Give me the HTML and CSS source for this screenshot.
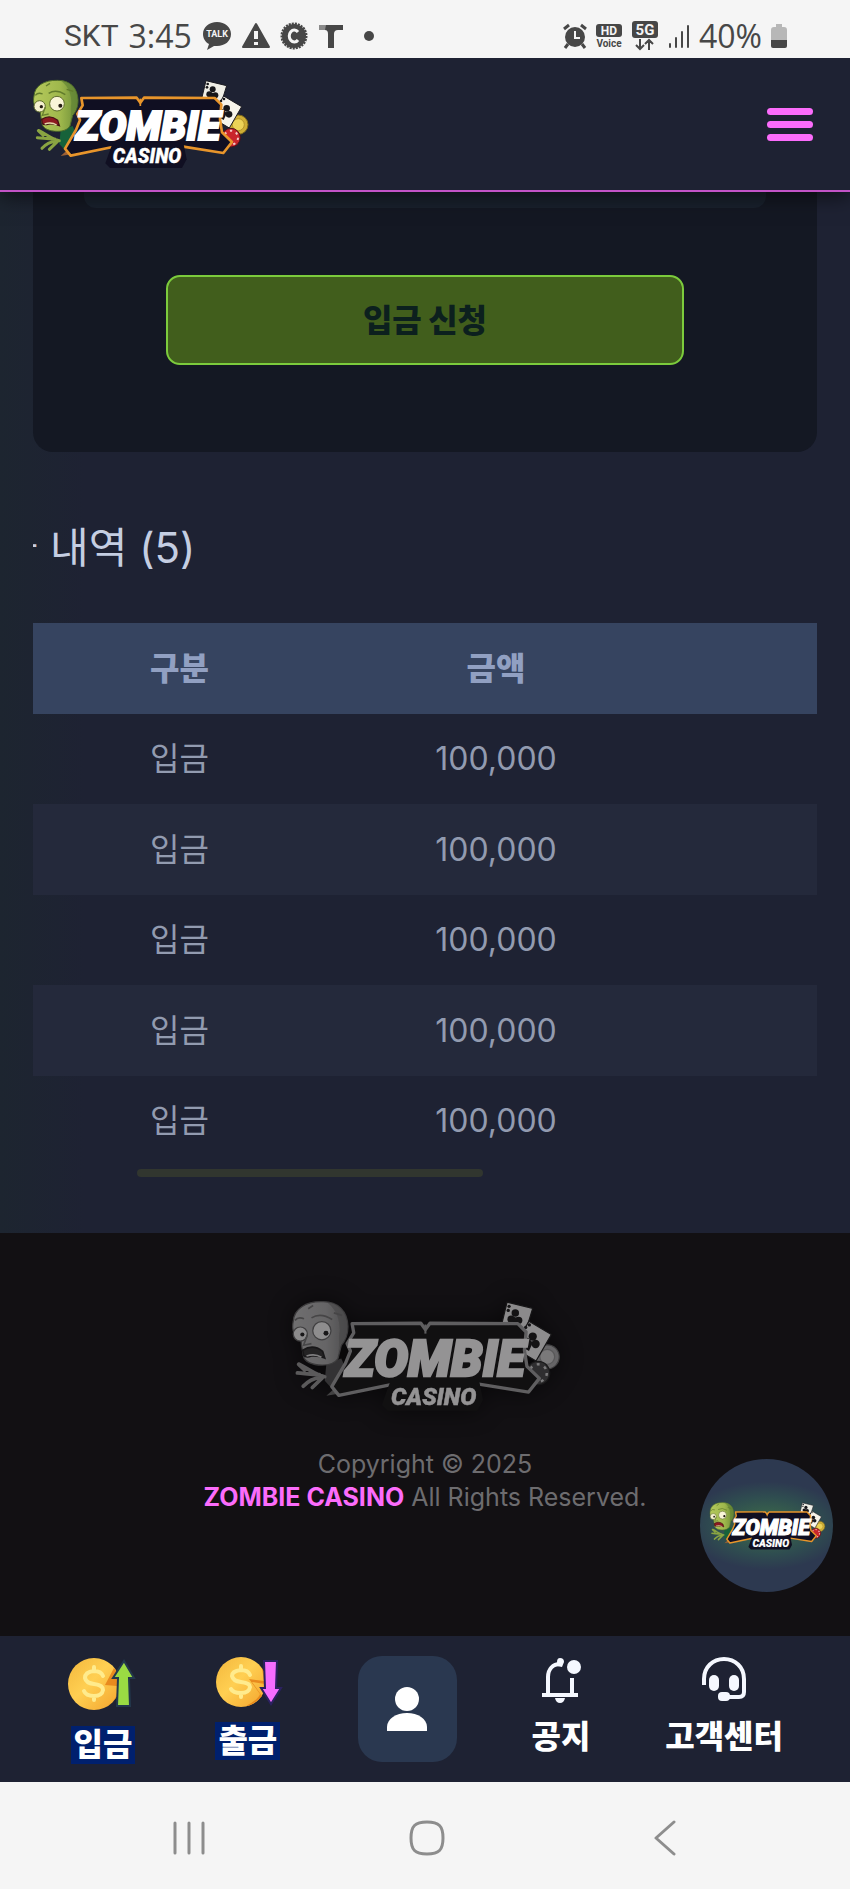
FILE: index.html
```html
<!DOCTYPE html>
<html lang="ko">
<head>
  <meta charset="UTF-8">
  <meta name="viewport" content="width=device-width, initial-scale=1.0">
  <title>ZOMBIE CASINO</title>
  <link rel="stylesheet" href="styles.css">
</head>
<body>
  <!-- shared logo -->
  <svg class="defs" width="0" height="0" aria-hidden="true">
    <defs>
      <linearGradient id="skin" x1="0" x2="1">
        <stop offset="0" stop-color="#b5c95c"/>
        <stop offset=".6" stop-color="#9fb84c"/>
        <stop offset="1" stop-color="#6c8d38"/>
      </linearGradient>
      <linearGradient id="coin" x1="0" x2="1" y2="1">
        <stop offset="0" stop-color="#f3b73c"/>
        <stop offset=".45" stop-color="#ffcf52"/>
        <stop offset="1" stop-color="#f3a32c"/>
      </linearGradient>
    </defs>
    <symbol id="logo" viewBox="30 50 660 280">
      <!-- chips and cards -->
      <circle cx="655" cy="192" r="29" fill="#cfae35" stroke="#806a1c" stroke-width="3"/>
      <circle cx="655" cy="192" r="18" fill="#ecd257" stroke="#b3942a" stroke-width="3"/>
      <circle cx="633" cy="231" r="28" fill="#c9252c" stroke="#521018" stroke-width="3"/>
      <circle cx="633" cy="231" r="21" fill="none" stroke="#f3c9c6" stroke-width="6" stroke-dasharray="7 12"/>
      <g stroke="#1a1a20" stroke-width="3">
        <path d="M558 60L620 75L602 134L544 118Z" fill="#efeee6"/>
        <path d="M611 106L665 138L628 202L574 170Z" fill="#f7f4ea"/>
      </g>
      <g fill="#16161a">
        <circle cx="578" cy="86" r="9"/><circle cx="568" cy="101" r="9"/><circle cx="586" cy="104" r="9"/>
        <path d="M575 96L584 98L578 119L566 115Z"/>
        <circle cx="620" cy="143" r="10"/><circle cx="606" cy="156" r="10"/><circle cx="627" cy="161" r="10"/>
        <path d="M611 152L621 156L611 178L599 171Z"/>
        <circle cx="563" cy="70" r="4"/><circle cx="561" cy="80" r="4"/><circle cx="612" cy="115" r="4"/><circle cx="603" cy="121" r="4"/>
      </g>
      <!-- zombie -->
      <path d="M122 208L158 196L176 238L140 274L118 250Z" fill="#17623a"/>
      <path d="M42 106C44 76 72 58 112 59C150 58 173 82 174 119C174 142 166 155 158 164L150 196C142 208 128 212 112 212C88 212 68 204 66 188L62 164L60 146C42 140 38 124 42 106Z" fill="url(#skin)" stroke="#4d6a29" stroke-width="3"/>
      <path d="M124 61C157 64 172 86 172 117C172 140 165 153 156 162L148 196C156 162 150 150 154 128C154 104 148 80 124 61Z" fill="#5e8133" opacity=".6"/>
      <path d="M78 76L90 68M86 98Q108 84 136 102M140 86L160 92M46 104Q54 94 68 100" fill="none" stroke="#627c2c" stroke-width="4"/>
      <circle cx="59" cy="137" r="17" fill="#f4f0cf" stroke="#5f6d2d" stroke-width="3"/>
      <circle cx="111" cy="129" r="22" fill="#f9f5d8" stroke="#5f6d2d" stroke-width="3"/>
      <circle cx="64" cy="138" r="5" fill="#231c12"/><circle cx="121" cy="135" r="6" fill="#231c12"/>
      <path d="M76 139L67 164L86 160" fill="none" stroke="#687f2f" stroke-width="4"/>
      <path d="M65 176Q90 160 113 179L118 195Q102 188 86 190Q72 195 67 188Z" fill="#8c1a20" stroke="#451315" stroke-width="4"/>
      <path d="M74 190Q94 183 110 193" fill="none" stroke="#e5d9aa" stroke-width="4"/>
      <path d="M118 240C96 236 86 225 57 210M105 235C83 235 69 232 52 231M107 242C86 244 76 252 66 263M112 243L88 266M55 210L70 224" fill="none" stroke="#8aa442" stroke-width="9" stroke-linecap="round"/>
      <path d="M122 286L142 268L158 280Z" fill="#9d6035"/>
      <!-- wordmark plate -->
      <path d="M184 112L350 111L361 126L372 111L584 112L604 132L600 176L606 215L636 244L610 277L490 258L278 259L152 285L135 264L168 208L180 178L172 160L188 134Z" fill="#100f22" stroke="#e8952b" stroke-width="8" stroke-linejoin="round"/>
      <path d="M278 246L490 246L500 296L486 322L270 322L256 308Z" fill="#100f22"/>
      <text class="logo-big" x="384" y="238" text-anchor="middle">ZOMBIE</text>
      <path d="M361 114V136" stroke="#e8952b" stroke-width="5"/>
      <text class="logo-small" x="381" y="308" text-anchor="middle">CASINO</text>
    </symbol>
  </svg>

  <div class="status-bar">
    <div class="status-left">
      <span class="carrier">SKT</span>
      <span class="time">3:45</span>
      <svg class="icon" width="30" height="28" viewBox="0 0 30 28">
        <path d="M15 0C23 0 29 5 29 12S23 24 15 24L12 24L5 28L7 22C3 20 1 16 1 12C1 5 7 0 15 0Z"/>
        <text class="mark" x="15" y="15" font-size="9" text-anchor="middle">TALK</text>
      </svg>
      <svg class="icon" width="28" height="28" viewBox="0 0 28 28">
        <path d="M14 2L27 25H1Z" stroke="#474747" stroke-width="2" stroke-linejoin="round"/>
        <path d="M14 9V17M14 20V23" stroke="#f5f5f5" stroke-width="4"/>
      </svg>
      <svg class="icon" width="28" height="28" viewBox="0 0 28 28">
        <circle cx="14" cy="14" r="12"/>
        <circle cx="14" cy="14" r="12" fill="none" stroke="#474747" stroke-width="3" stroke-dasharray="2 1"/>
        <path d="M18 10A5 6 0 1 0 18 18" fill="none" stroke="#f5f5f5" stroke-width="3"/>
      </svg>
      <svg class="icon" width="26" height="28" viewBox="0 0 26 28">
        <path d="M1 3H14V8H1Z" fill="#8b8b8b"/>
        <path d="M8 3H25V8H20Q16 8 16 12V26H10V12Q10 8 7 8Z"/>
      </svg>
      <span class="dot"></span>
    </div>
    <div class="status-right">
      <svg class="icon" width="24" height="26" viewBox="0 0 24 26">
        <circle cx="12" cy="14" r="10"/>
        <path d="M1 6L6 2M23 6L18 2M5 21L2 25M19 21L22 25" stroke="#474747" stroke-width="3"/>
        <path d="M12 8V15H17" fill="none" stroke="#f5f5f5" stroke-width="2"/>
      </svg>
      <svg class="icon" width="28" height="26" viewBox="0 0 28 26">
        <rect x="1" y="1" width="26" height="13" rx="3"/>
        <text class="mark" x="14" y="12" font-size="12" text-anchor="middle">HD</text>
        <text x="14" y="24" font-size="10" text-anchor="middle">Voice</text>
      </svg>
      <svg class="icon" width="28" height="32" viewBox="0 0 28 32">
        <rect x="1" y="1" width="26" height="17" rx="3"/>
        <text class="mark" x="14" y="15" font-size="15" text-anchor="middle">5G</text>
        <path d="M9 19V29M5 25L9 29L13 25M18 30V20M14 24L18 20L22 24" fill="none" stroke="#474747" stroke-width="2"/>
      </svg>
      <svg class="icon" width="24" height="26" viewBox="0 0 24 26">
        <path d="M3 21V24M9 15V24M15 9V24M21 3V24" stroke="#474747" stroke-width="2" stroke-linecap="round"/>
      </svg>
      <span class="time">40%</span>
      <svg class="icon" width="18" height="26" viewBox="0 0 18 26">
        <path d="M6 1H12V4H14Q17 4 17 7V18H1V7Q1 4 4 4H6Z" fill="#b7b7b7"/>
        <path d="M1 17H17V23Q17 25 15 25H3Q1 25 1 23Z"/>
      </svg>
    </div>
  </div>

  <header class="header">
    <a href="#" aria-label="ZOMBIE CASINO"><svg class="header-logo"><use href="#logo"/></svg></a>
    <button class="menu-btn" type="button" aria-label="메뉴">
      <span></span><span></span><span></span>
    </button>
  </header>

  <main class="content">
    <section class="card">
      <div class="card-panel"></div>
      <button class="submit-btn" type="button">입금 신청</button>
    </section>

    <section class="history">
      <div class="history-inner">
        <h2 class="history-title">입금 내역 (5)</h2>
        <table class="history-table">
          <thead>
            <tr><th class="col-type">구분</th><th class="col-amount">금액</th><th></th></tr>
          </thead>
          <tbody>
            <tr><td>입금</td><td>100,000</td><td></td></tr>
            <tr><td>입금</td><td>100,000</td><td></td></tr>
            <tr><td>입금</td><td>100,000</td><td></td></tr>
            <tr><td>입금</td><td>100,000</td><td></td></tr>
            <tr><td>입금</td><td>100,000</td><td></td></tr>
          </tbody>
        </table>
      </div>
      <div class="scroll-track"><div class="scroll-thumb"></div></div>
    </section>
  </main>

  <footer class="footer">
    <svg class="footer-logo"><use href="#logo"/></svg>
    <p>Copyright © 2025<br><strong>ZOMBIE CASINO</strong> All Rights Reserved.</p>
    <a class="float-btn" href="#" aria-label="ZOMBIE CASINO"><svg><use href="#logo"/></svg></a>
  </footer>

  <nav class="tab-bar">
    <a class="tab" href="#">
      <svg width="70" height="56" viewBox="-1 0 70 56">
        <circle cx="25" cy="28" r="26" fill="url(#coin)"/>
        <path d="M45 12L36 29L48 30Q50 44 36 51Q50 44 51 28Q50 18 45 12Z" fill="#e88a1e"/>
        <path d="M34 20Q32 15 25 15Q16 16 16 22Q17 27 25 28Q34 29 34 34Q33 40 25 40Q17 40 15 35M25 11V15M25 40V44" fill="none" stroke="#ffeb8d" stroke-width="4" stroke-linecap="round"/>
        <path d="M55 5L65 22H60L61 50H48L49 22H44Z" fill="#9adb43" stroke="#23384c" stroke-width="2"/>
      </svg>
      <span class="tab-label marked">입금</span>
    </a>
    <a class="tab" href="#">
      <svg width="70" height="52" viewBox="-3 0 70 52">
        <circle cx="25" cy="26" r="25" fill="url(#coin)"/>
        <path d="M46 12Q52 22 49 28L36 26L46 40Q38 49 30 50Q43 43 44 38L33 23L48 25Z" fill="#e88a1e"/>
        <path d="M34 19Q32 14 25 14Q16 15 16 20Q17 25 25 26Q34 27 34 31Q33 37 25 37Q17 37 15 33M25 10V14M25 37V41" fill="none" stroke="#ffeb8d" stroke-width="4" stroke-linecap="round"/>
        <path d="M48 5H61L60 32H65L55 48L45 32H49Z" fill="#f66cff" stroke="#2b2160" stroke-width="2"/>
      </svg>
      <span class="tab-label marked">출금</span>
    </a>
    <a class="tab-center" href="#" aria-label="내 정보">
      <svg width="44" height="48" viewBox="0 0 44 48">
        <circle cx="22" cy="14" r="12" fill="#fff"/>
        <path d="M2 46V42C2 34 11 28 22 28S42 34 42 42V46Z" fill="#fff"/>
      </svg>
    </a>
    <a class="tab" href="#">
      <svg width="42" height="48" viewBox="0 0 42 48">
        <path d="M2 39H38M8 39V21C8 13 13 8 20 8M32 22V39" fill="none" stroke="#f5f8ff" stroke-width="4"/>
        <path d="M17 10V6Q17 2 20 2Q24 2 24 6L22 11Z" fill="#f5f8ff"/>
        <circle cx="34" cy="11" r="7" fill="#f5f8ff"/>
        <path d="M15 42H25Q24 47 20 47Q16 47 15 42Z" fill="#f5f8ff"/>
      </svg>
      <span class="tab-label">공지</span>
    </a>
    <a class="tab" href="#">
      <svg width="46" height="48" viewBox="0 0 46 48">
        <path d="M3 29V23C3 11 12 3 23 3S43 11 43 23V36Q43 41 38 41H24" fill="none" stroke="#f5f8ff" stroke-width="4"/>
        <rect x="8" y="19" width="10" height="16" rx="5" fill="#f5f8ff"/>
        <rect x="28" y="19" width="10" height="16" rx="5" fill="#f5f8ff"/>
        <rect x="17" y="36" width="12" height="9" rx="4" fill="#f5f8ff"/>
      </svg>
      <span class="tab-label">고객센터</span>
    </a>
  </nav>

  <div class="system-nav">
    <button type="button" aria-label="최근 앱">
      <svg width="34" height="36" viewBox="0 0 34 36"><path d="M3 3V33M17 3V33M31 3V33"/></svg>
    </button>
    <button type="button" aria-label="홈">
      <svg width="36" height="36" viewBox="0 0 36 36"><path d="M18 2C30 2 34 6 34 18S30 34 18 34S2 30 2 18S6 2 18 2Z"/></svg>
    </button>
    <button type="button" aria-label="뒤로">
      <svg width="22" height="36" viewBox="0 0 22 36"><path d="M20 2L2 18L20 34"/></svg>
    </button>
  </div>
</body>
</html>
```

FILE: styles.css
```css
* {
    box-sizing: border-box;
}
body {
    margin: 0;
    background: #1e2233;
    color: #929bb0;
    font-family: Inter, "Noto Sans CJK KR", sans-serif;
    font-size: 32px;
}
a {
    color: inherit;
    text-decoration: none;
}
button {
    font-family: inherit;
    cursor: pointer;
}
svg {
    display: block;
}
.defs {
    position: absolute;
}
.logo-big,
.logo-small {
    font-family: Roboto, sans-serif;
    font-weight: 900;
    font-style: italic;
    fill: #fff;
    stroke: #fff;
}
.logo-big {
    font-size: 122px;
    stroke-width: 6px;
}
.logo-small {
    font-size: 58px;
    stroke-width: 1px;
}

/* phone status bar */
.status-bar {
    position: relative;
    z-index: 3;
    display: flex;
    justify-content: space-between;
    align-items: center;
    height: 58px;
    padding: 14px 62px 0 64px;
    background: #f5f5f5;
    color: #474747;
}
.status-left,
.status-right {
    display: flex;
    align-items: center;
    gap: 10px;
}
.status-right {
    gap: 8px;
}
.carrier {
    font-family: Roboto, sans-serif;
    font-size: 30px;
    line-height: 32px;
}
.time {
    font-family: "Open Sans", sans-serif;
    font-size: 32px;
    line-height: 32px;
}
.icon {
    fill: #474747;
    font-family: Roboto, sans-serif;
    font-weight: 700;
}
.icon .mark {
    fill: #f5f5f5;
}
.dot {
    width: 10px;
    height: 10px;
    margin-left: 10px;
    border-radius: 50%;
    background: #474747;
}

.header {
    position: relative;
    z-index: 2;
    display: flex;
    justify-content: space-between;
    align-items: center;
    height: 134px;
    padding: 0 37px 0 30px;
    background: #1e2233;
    border-bottom: 2px solid #c253c6;
    box-shadow: 0 4px 20px rgba(0, 0, 0, 0.6);
}
.header-logo {
    width: 220px;
    height: 94px;
}
.menu-btn {
    display: grid;
    gap: 6px;
    width: 46px;
    padding: 0;
    border: 0;
    background: none;
}
.menu-btn span {
    height: 7px;
    border-radius: 4px;
    background: #fb6cfb;
}

.content {
    padding: 0 33px 56px;
    background: linear-gradient(to right, #1d2530, #1e2233 10%);
}
.card {
    display: flex;
    flex-direction: column;
    align-items: center;
    padding-bottom: 87px;
    border-radius: 0 0 20px 20px;
    background: #141823;
}
.card-panel {
    width: 87%;
    height: 16px;
    margin-bottom: 67px;
    border-radius: 0 0 12px 12px;
    background: #19212d;
}
.submit-btn {
    width: 66%;
    height: 90px;
    padding: 0 0 4px;
    border: 2px solid #7ccb3c;
    border-radius: 14px;
    background: #415e1c;
    color: #0c201e;
    font-size: 32px;
    font-weight: 900;
}

/* the list is wider than the screen and sits scrolled to the right */
.history {
    padding-top: 66px;
    overflow: hidden;
}
.history-inner {
    margin-left: -72px;
}
.history-title {
    margin: 0 0 45px;
    color: #c5cee2;
    font-size: 42px;
    font-weight: 400;
    line-height: 60px;
}
.history-table {
    width: 100%;
    table-layout: fixed;
    border-collapse: collapse;
    text-align: center;
}
.history-table th,
.history-table td {
    height: 90px;
    padding: 0;
    line-height: 40px;
}
.history-table th,
.history-table tr:nth-child(even) td {
    height: 91px;
}
.history-table th {
    background: #364460;
    color: #91a0c2;
    font-weight: 900;
}
.history-table .col-type {
    width: 437px;
}
.history-table .col-amount {
    width: 196px;
}
.history-table tbody tr:nth-child(even) {
    background: #24293b;
}
.scroll-track {
    padding: 3px 0 0 104px;
}
.scroll-thumb {
    width: 346px;
    height: 8px;
    border-radius: 4px;
    background: #31362f;
}

.footer {
    position: relative;
    display: flex;
    flex-direction: column;
    align-items: center;
    padding: 65px 0 112px;
    background: #121013;
    color: #6d6c6f;
    text-align: center;
}
.footer-logo {
    width: 274px;
    height: 116px;
    filter: grayscale(1) drop-shadow(0 0 12px #000);
    opacity: 0.55;
}
.footer p {
    margin: 34px 0 0;
    padding-bottom: 10px;
    font-size: 25px;
    line-height: 33px;
}
.footer strong {
    color: #fb6cfb;
}
.float-btn {
    position: absolute;
    right: 17px;
    bottom: 44px;
    display: flex;
    align-items: center;
    justify-content: center;
    width: 133px;
    height: 133px;
    border-radius: 50%;
    background: radial-gradient(ellipse 80px 44px, #3f7048, #2f4d50 65%, transparent), #2d3950;
}
.float-btn svg {
    width: 118px;
    height: 50px;
}

.tab-bar {
    display: flex;
    justify-content: space-between;
    align-items: flex-start;
    height: 146px;
    padding: 20px 67px 0 68px;
    background: #1e2233;
    color: #fff;
}
.tab {
    display: flex;
    flex-direction: column;
    align-items: center;
    gap: 14px;
}
.tab-label {
    font-size: 32px;
    font-weight: 900;
    line-height: 38px;
}
.tab-label.marked {
    padding: 0 3px;
    background: #00206e;
}
.tab-center {
    display: flex;
    align-items: center;
    justify-content: center;
    width: 99px;
    height: 106px;
    border-radius: 24px;
    background: #2a3850;
}

.system-nav {
    display: grid;
    grid-template-columns: repeat(3, 1fr);
    place-items: center;
    height: 107px;
    padding: 4px 66px 0 70px;
    background: #f5f5f5;
}
.system-nav button {
    padding: 0;
    border: 0;
    background: none;
}
.system-nav svg {
    fill: none;
    stroke: #8d8d8d;
    stroke-width: 3px;
    stroke-linecap: round;
    stroke-linejoin: round;
}
```
